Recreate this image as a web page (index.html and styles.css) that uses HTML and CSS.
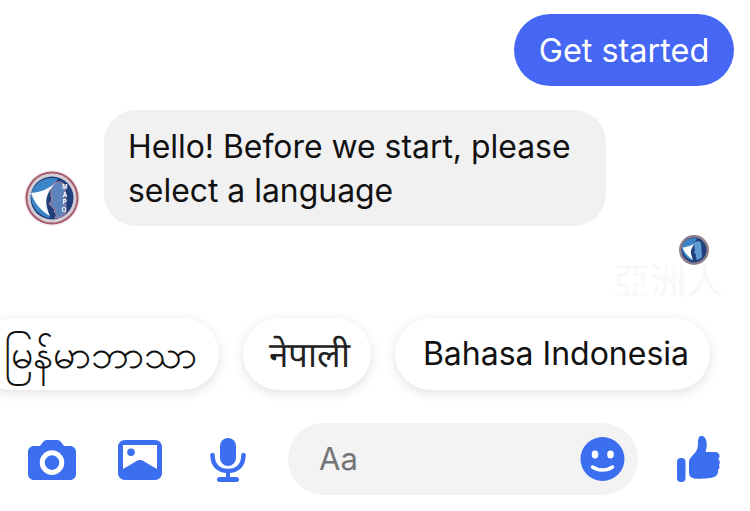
FILE: index.html
```html
<!DOCTYPE html>
<html lang="en">
<head>
    <meta charset="UTF-8">
    <meta name="viewport" content="width=device-width, initial-scale=1.0">
    <title>Chat</title>
    <link rel="stylesheet" href="styles.css">
</head>
<body>
    <div class="chat">
        <div class="row-out">
            <div class="bubble-out">Get started</div>
        </div>

        <div class="row-in">
            <svg class="avatar" viewBox="0 0 56 56">
                <circle cx="28" cy="28" r="28" fill="#f1ecea"/>
                <circle cx="28" cy="28" r="26.500" fill="#a9596c"/>
                <circle cx="28" cy="28" r="24.500" fill="#d3cdd6"/>
                <circle cx="28" cy="28" r="21.500" fill="#1f3f7c"/>
                <path d="M7 26c1-10 10-18 21-18 2 0 4 .3 6 1L20 26l6 22C14 46 7 36 7 26z" fill="#3c86c8"/>
                <path d="M30 13c5-2 9-1 11 2l1 28c-3 3-7 5-11 5 2-3 1-5-1-6l1-3-2-1-1-2-3-2 3-4c-2-7-1-14 2-17z" fill="#5c83bc" stroke="#b98098" stroke-width="1"/>
                <path d="M33 12C26 18 18 22 7 23c3 9 9 17 19 23-4-8-5-16-2-22 2-5 5-9 9-12z" fill="#fbfdfe"/>
                <text class="avatar-text" x="41" y="19">M</text>
                <text class="avatar-text" x="41" y="26.500">A</text>
                <text class="avatar-text" x="41" y="34">P</text>
                <text class="avatar-text" x="40" y="41.500">O</text>
            </svg>
            <div class="bubble-in">Hello! Before we start, please select a language</div>
        </div>

        <div class="row-seen">
            <svg class="seen" viewBox="0 0 30 30">
                <circle cx="15" cy="15" r="15" fill="#8d7f8c"/>
                <circle cx="15" cy="15" r="12.500" fill="#1f3f7c"/>
                <path d="M3 13c1-6 6-10 12-10 1 0 2 .2 3 .5L11 14l3 11.500C7 24 3 18 3 13z" fill="#3c86c8"/>
                <path d="M16 7c3-1 5-1 6 1l1 14c-2 2-4 3-6 3 1-2 .5-3-.5-3.500l.5-2-2-2 1-2c-1-3-1-6 0-8.500z" fill="#5c9ad0"/>
                <path d="M18 6c-4 4-8 6-14.500 6.500C5 17 9 21.500 14 25c-2-4.500-3-9-1-12 1-3 3-5 5-7z" fill="#fbfdfe"/>
            </svg>
        </div>

        <div class="chips">
            <div class="chip chip-my">မြန်မာဘာသာ</div>
            <div class="chip chip-ne">नेपाली</div>
            <div class="chip chip-id">Bahasa Indonesia</div>
        </div>

        <div class="composer">
            <svg class="icon-camera" viewBox="0 0 48 40">
                <path fill-rule="evenodd" d="M6 6h6l2.500-3.500C16 .8 17 0 19 0h10c2 0 3 .8 4.500 2.500L36 6h6c3.500 0 6 2.500 6 6v22c0 3.500-2.500 6-6 6H6c-3.500 0-6-2.500-6-6V12c0-3.500 2.500-6 6-6zm18 4.300a12.300 12.300 0 1 0 0 24.600 12.300 12.300 0 0 0 0-24.600zm0 5a7.300 7.300 0 1 1 0 14.600 7.300 7.300 0 0 1 0-14.600z" fill="#3b6ff0"/>
            </svg>
            <svg class="icon-image" viewBox="0 0 44 40">
                <path fill-rule="evenodd" d="M7 0h30c4 0 7 3 7 7v26c0 4-3 7-7 7H7c-4 0-7-3-7-7V7c0-4 3-7 7-7zM5 5v24l9.500-5.500c3-1.800 5-3.500 7.500-3.500s4.500 1.700 7.500 3.500L39 29V5zM13 8.500a3.800 3.800 0 1 1 0 7.600 3.800 3.800 0 0 1 0-7.600z" fill="#3b6ff0"/>
            </svg>
            <svg class="icon-mic" viewBox="0 0 36 44">
                <rect x="10" y="0" width="16" height="28" rx="8" fill="#3b6ff0"/>
                <path d="M2.500 17c0 10 6 16 15.500 16s15.500-6 15.500-16" fill="none" stroke="#3b6ff0" stroke-width="4.500" stroke-linecap="round"/>
                <rect x="16" y="33" width="4" height="8" fill="#3b6ff0"/>
                <rect x="7" y="39" width="22" height="5" rx="2.500" fill="#3b6ff0"/>
            </svg>
            <div class="input">
                <span class="placeholder">Aa</span>
                <svg class="icon-smile" viewBox="0 0 44 44">
                    <circle cx="22" cy="22" r="22" fill="#3b6ff0"/>
                    <ellipse cx="14.500" cy="17.500" rx="3.300" ry="4" fill="#fff"/>
                    <ellipse cx="30" cy="17.500" rx="3.300" ry="4" fill="#fff"/>
                    <path d="M12 30c6 4 14 4 20 0" fill="none" stroke="#fff" stroke-width="3.500" stroke-linecap="round"/>
                </svg>
            </div>
            <svg class="icon-like" viewBox="0 0 46 48">
                <rect x="1" y="23" width="8.500" height="24" rx="4" fill="#3b6ff0"/>
                <path d="M13 27c0-3 2-5 4-7 4-4 5-7 5-12 0-4 .5-6.500 3-7 3-.5 5 2 5.500 6 .5 4 0 7-1 10H39c3 0 4.500 2 4.500 4 0 1.500-.5 2.500-1.500 3 2 1.500 2.500 4 1 6 1 1.500.5 4-1 5 .5 3-1 6-4 7-4 1.500-14 2-20 1.500-3-.5-5-2.500-5-5.500z" fill="#3b6ff0"/>
            </svg>
        </div>
    </div>

    <div class="watermark">亞洲人</div>
</body>
</html>
```

FILE: styles.css
```css
* {
    box-sizing: border-box;
}
html, body {
    margin: 0;
    height: 100%;
    background: #fff;
    overflow: hidden;
}
body {
    position: relative;
    font-family: Inter, Roboto, "Liberation Sans", sans-serif;
    color: #111;
}
.chat {
    display: flex;
    flex-direction: column;
    width: 750px;
    height: 511px;
    padding-top: 14px;
}
.row-out {
    display: flex;
    justify-content: flex-end;
    padding-right: 16px;
}
.bubble-out {
    width: 220px;
    height: 72px;
    line-height: 74px;
    text-align: center;
    font-size: 32.400px;
    color: #fff;
    background: #4567f3;
    border-radius: 36px;
}
.row-in {
    display: flex;
    align-items: flex-end;
    margin-top: 24px;
    padding-left: 24px;
}
.avatar {
    width: 56px;
    height: 56px;
    margin-right: 24px;
    filter: blur(0.4px);
}
.avatar-text {
    font-family: "Liberation Sans", sans-serif;
    font-size: 6.400px;
    font-weight: bold;
    text-anchor: middle;
    fill: #fff;
}
.bubble-in {
    width: 502px;
    height: 116px;
    padding: 15px 24px 0;
    font-size: 31.900px;
    line-height: 44px;
    background: #f1f1f2;
    border-radius: 32px;
}
.row-seen {
    display: flex;
    justify-content: flex-end;
    margin-top: 9px;
    padding-right: 41px;
}
.seen {
    width: 30px;
    height: 30px;
    filter: blur(0.4px);
}
.chips {
    display: flex;
    justify-content: flex-end;
    gap: 24px;
    margin-top: 53px;
    padding-right: 40px;
}
.chip {
    flex: none;
    height: 72px;
    line-height: 72px;
    background: #fff;
    border-radius: 36px;
    box-shadow: 0 3px 12px rgba(0, 0, 0, 0.12);
    white-space: nowrap;
}
.chip-my {
    padding: 0 22px 0 29px;
    font-size: 39.300px;
}
.chip-ne {
    padding: 0 21px 0 26px;
    font-size: 35px;
    font-weight: 300;
    color: #222;
}
.chip-id {
    padding: 0 21px 0 28px;
    font-size: 32px;
}
.composer {
    display: flex;
    align-items: center;
    height: 72px;
    margin-top: 33px;
    padding-left: 28px;
}
.icon-camera {
    width: 48px;
    height: 40px;
    margin-top: 2px;
}
.icon-image {
    width: 44px;
    height: 40px;
    margin-left: 42px;
    margin-top: 2px;
}
.icon-mic {
    width: 36px;
    height: 44px;
    margin-left: 48px;
    margin-top: 2px;
}
.input {
    display: flex;
    align-items: center;
    justify-content: space-between;
    width: 350px;
    height: 72px;
    margin-left: 42px;
    padding: 0 13px 0 31px;
    background: #f3f3f4;
    border-radius: 36px;
}
.placeholder {
    margin-top: -2px;
    font-size: 31px;
    color: #757575;
}
.icon-smile {
    width: 45px;
    height: 44px;
}
.icon-like {
    width: 46px;
    height: 48px;
    margin-left: 38px;
}
.watermark {
    position: absolute;
    left: 613px;
    top: 252px;
    font-family: "Noto Sans CJK TC", sans-serif;
    font-size: 36px;
    letter-spacing: 1px;
    color: #f8f8f8;
    white-space: nowrap;
}
```
